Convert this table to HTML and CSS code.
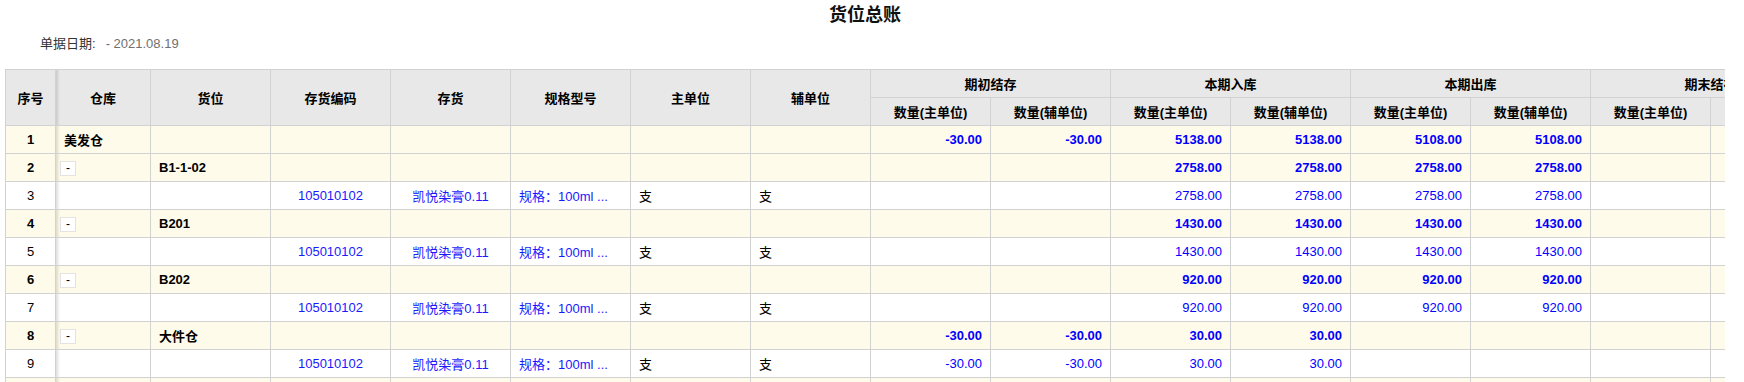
FILE: index.html
```html
<!DOCTYPE html>
<html lang="zh">
<head>
<meta charset="utf-8">
<title>货位总账</title>
<link rel="stylesheet" href="styles.css">
</head>
<body>
<div class="page">
  <div class="title">货位总账</div>
  <div class="meta"><span class="label">单据日期:</span><span class="value">- 2021.08.19</span></div>
  <div class="grid-wrap">
    <table class="grid">
      <colgroup>
        <col class="w-idx"><col class="w-wh">
        <col class="w-std"><col class="w-std"><col class="w-std"><col class="w-std"><col class="w-std"><col class="w-std">
        <col class="w-std"><col class="w-std"><col class="w-std"><col class="w-std">
        <col class="w-std"><col class="w-std"><col class="w-std"><col class="w-std">
      </colgroup>
      <thead>
        <tr>
          <th rowspan="2" class="idx">序号</th>
          <th rowspan="2">仓库</th>
          <th rowspan="2">货位</th>
          <th rowspan="2">存货编码</th>
          <th rowspan="2">存货</th>
          <th rowspan="2">规格型号</th>
          <th rowspan="2">主单位</th>
          <th rowspan="2">辅单位</th>
          <th colspan="2">期初结存</th>
          <th colspan="2">本期入库</th>
          <th colspan="2">本期出库</th>
          <th colspan="2">期末结存</th>
        </tr>
        <tr>
          <th>数量(主单位)</th><th>数量(辅单位)</th>
          <th>数量(主单位)</th><th>数量(辅单位)</th>
          <th>数量(主单位)</th><th>数量(辅单位)</th>
          <th>数量(主单位)</th><th>数量(辅单位)</th>
        </tr>
      </thead>
      <tbody>
        <tr class="group">
          <td class="idx">1</td><td>美发仓</td><td></td><td></td><td></td><td></td><td></td><td></td>
          <td class="num">-30.00</td><td class="num">-30.00</td>
          <td class="num">5138.00</td><td class="num">5138.00</td>
          <td class="num">5108.00</td><td class="num">5108.00</td>
          <td></td><td></td>
        </tr>
        <tr class="group">
          <td class="idx">2</td><td><span class="toggle">-</span></td><td>B1-1-02</td><td></td><td></td><td></td><td></td><td></td>
          <td></td><td></td>
          <td class="num">2758.00</td><td class="num">2758.00</td>
          <td class="num">2758.00</td><td class="num">2758.00</td>
          <td></td><td></td>
        </tr>
        <tr>
          <td class="idx">3</td><td></td><td></td>
          <td class="link c">105010102</td><td class="link c">凯悦染膏0.11</td><td class="link">规格：100ml ...</td>
          <td>支</td><td>支</td>
          <td></td><td></td>
          <td class="num">2758.00</td><td class="num">2758.00</td>
          <td class="num">2758.00</td><td class="num">2758.00</td>
          <td></td><td></td>
        </tr>
        <tr class="group">
          <td class="idx">4</td><td><span class="toggle">-</span></td><td>B201</td><td></td><td></td><td></td><td></td><td></td>
          <td></td><td></td>
          <td class="num">1430.00</td><td class="num">1430.00</td>
          <td class="num">1430.00</td><td class="num">1430.00</td>
          <td></td><td></td>
        </tr>
        <tr>
          <td class="idx">5</td><td></td><td></td>
          <td class="link c">105010102</td><td class="link c">凯悦染膏0.11</td><td class="link">规格：100ml ...</td>
          <td>支</td><td>支</td>
          <td></td><td></td>
          <td class="num">1430.00</td><td class="num">1430.00</td>
          <td class="num">1430.00</td><td class="num">1430.00</td>
          <td></td><td></td>
        </tr>
        <tr class="group">
          <td class="idx">6</td><td><span class="toggle">-</span></td><td>B202</td><td></td><td></td><td></td><td></td><td></td>
          <td></td><td></td>
          <td class="num">920.00</td><td class="num">920.00</td>
          <td class="num">920.00</td><td class="num">920.00</td>
          <td></td><td></td>
        </tr>
        <tr>
          <td class="idx">7</td><td></td><td></td>
          <td class="link c">105010102</td><td class="link c">凯悦染膏0.11</td><td class="link">规格：100ml ...</td>
          <td>支</td><td>支</td>
          <td></td><td></td>
          <td class="num">920.00</td><td class="num">920.00</td>
          <td class="num">920.00</td><td class="num">920.00</td>
          <td></td><td></td>
        </tr>
        <tr class="group">
          <td class="idx">8</td><td><span class="toggle">-</span></td><td>大件仓</td><td></td><td></td><td></td><td></td><td></td>
          <td class="num">-30.00</td><td class="num">-30.00</td>
          <td class="num">30.00</td><td class="num">30.00</td>
          <td></td><td></td>
          <td></td><td></td>
        </tr>
        <tr>
          <td class="idx">9</td><td></td><td></td>
          <td class="link c">105010102</td><td class="link c">凯悦染膏0.11</td><td class="link">规格：100ml ...</td>
          <td>支</td><td>支</td>
          <td class="num">-30.00</td><td class="num">-30.00</td>
          <td class="num">30.00</td><td class="num">30.00</td>
          <td></td><td></td>
          <td></td><td></td>
        </tr>
        <tr class="group">
          <td class="idx"></td><td></td><td></td><td></td><td></td><td></td><td></td><td></td>
          <td></td><td></td><td></td><td></td><td></td><td></td><td></td><td></td>
        </tr>
      </tbody>
    </table>
  </div>
</div>
</body>
</html>
```

FILE: styles.css
```css
html, body {
  margin: 0;
  padding: 0;
  background: #fff;
  overflow: hidden;
}

.page {
  width: 1720px;
  margin-left: 5px;
  font-family: "Liberation Sans", Arial, "Noto Sans CJK SC", sans-serif;
  font-size: 13px;
  color: #000;
}

.title {
  height: 28px;
  line-height: 28px;
  padding-top: 1px;
  box-sizing: border-box;
  text-align: center;
  font-size: 18px;
  font-weight: bold;
  color: #111;
}

.meta {
  margin-top: 6px;
  height: 20px;
  line-height: 20px;
  padding-left: 35px;
}

.meta .label {
  color: #333;
  margin-right: 10px;
}

.meta .value {
  color: #707070;
}

.grid-wrap {
  margin-top: 15px;
  overflow: hidden;
}

.grid {
  border-collapse: collapse;
  table-layout: fixed;
  width: 1825px;
}

.w-idx { width: 50px; }
.w-wh { width: 95px; }
.w-std { width: 120px; }

.grid th,
.grid td {
  border: 1px solid #d2d2d2;
  padding: 0 8px;
  white-space: nowrap;
  overflow: hidden;
  text-overflow: ellipsis;
}

.grid thead tr {
  height: 28px;
}

.grid th {
  background: #e8e8e8;
  font-weight: bold;
  text-align: center;
  color: #000;
}

.grid tbody tr {
  height: 28px;
  background: #fff;
}

.grid tbody tr.group {
  background: #fefbea;
  font-weight: bold;
}

.grid .idx {
  text-align: center;
  position: relative;
  overflow: visible;
}

.grid .idx::after {
  content: "";
  position: absolute;
  top: 0;
  bottom: 0;
  right: -5px;
  width: 4px;
  background: linear-gradient(to right, rgba(0, 0, 0, 0.13), rgba(0, 0, 0, 0));
}

.grid td.num {
  text-align: right;
  color: #0000ff;
}

.grid td.link {
  color: #1a1aff;
}

.grid td.c {
  text-align: center;
}

.toggle {
  display: inline-block;
  box-sizing: border-box;
  width: 16px;
  height: 15px;
  margin-left: -4px;
  border: 1px solid #e3e3e3;
  background: #fff;
  line-height: 12px;
  text-align: center;
  font-size: 12px;
  font-weight: normal;
  vertical-align: middle;
}
```
